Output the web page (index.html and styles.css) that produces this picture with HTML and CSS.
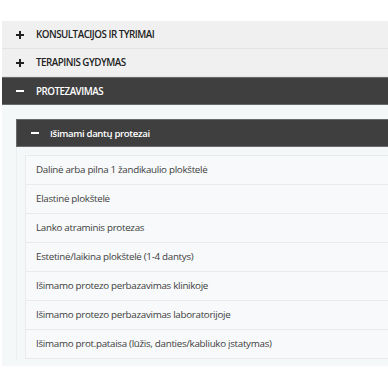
FILE: index.html
```html
<!DOCTYPE html>
<html lang="lt">
<head>
<meta charset="utf-8">
<link rel="stylesheet" href="styles.css">
</head>
<body>
<div class="accordion">
  <div class="acc-item">
    <div class="acc-head"><span class="icon plus"></span><span class="label">KONSULTACIJOS IR TYRIMAI</span></div>
  </div>
  <div class="acc-item">
    <div class="acc-head"><span class="icon plus"></span><span class="label">TERAPINIS GYDYMAS</span></div>
  </div>
  <div class="acc-item open">
    <div class="acc-head dark"><span class="icon minus"></span><span class="label">PROTEZAVIMAS</span></div>
    <div class="acc-body">
      <div class="sub">
        <div class="sub-head"><span class="icon minus"></span><span class="sub-label">Išimami dantų protezai</span></div>
        <div class="sub-body">
          <ul class="list">
            <li>Dalinė arba pilna 1 žandikaulio plokštelė</li>
            <li>Elastinė plokštelė</li>
            <li>Lanko atraminis protezas</li>
            <li>Estetinė/laikina plokštelė (1-4 dantys)</li>
            <li>Išimamo protezo perbazavimas klinikoje</li>
            <li>Išimamo protezo perbazavimas laboratorijoje</li>
            <li>Išimamo prot.pataisa (lūžis, danties/kabliuko įstatymas)</li>
          </ul>
        </div>
      </div>
    </div>
  </div>
</div>
</body>
</html>
```

FILE: styles.css
```css
html, body {
  margin: 0;
  padding: 0;
  background: #ffffff;
  overflow: hidden;
}
body {
  font-family: "Open Sans", "Liberation Sans", sans-serif;
  width: 388px;
  height: 388px;
  overflow: hidden;
}
.accordion {
  margin: 21px 0 0 2px;
  width: 406px;
}
.acc-head {
  height: 27px;
  display: flex;
  align-items: center;
  background: #f0f0f0;
  border-bottom: 1px solid #e4e4e4;
  color: #222;
  padding-left: 14px;
}
.acc-head.dark {
  background: #3f3f3f;
  color: #fff;
  border-top: 1px solid #6a6a6a;
  border-bottom: 1px solid #6a6a6a;
  height: 26px;
}
.label {
  font-size: 9.8px;
  font-weight: 600;
  letter-spacing: -0.5px;
  margin-left: 12px;
}
.icon {
  position: relative;
  width: 8px;
  height: 8px;
  flex: none;
}
.icon::before, .icon::after {
  content: "";
  position: absolute;
  background: currentColor;
}
.icon::before {
  left: 0;
  top: 3px;
  width: 8px;
  height: 2px;
}
.plus::after {
  left: 3px;
  top: 0;
  width: 2px;
  height: 8px;
}
.minus::after { display: none; }
.acc-body {
  background: #f5f8f9;
  padding: 14px 0 7px 14px;
}
.sub-head {
  height: 26px;
  display: flex;
  align-items: center;
  background: #3f3f3f;
  color: #fff;
  border: 1px solid #6a6a6a;
  padding-left: 14px;
}
.sub-label {
  font-size: 9.6px;
  font-weight: 600;
  letter-spacing: -0.35px;
  margin-left: 11px;
}
.sub-body {
  border-left: 1px solid #e9eef0;
  padding: 8px 0 0 8px;
}
.list {
  list-style: none;
  margin: 0;
  padding: 0;
  border: 1px solid #e8eaeb;
  border-right: none;
  background: #f7f9fa;
}
.list li {
  height: 28px;
  line-height: 28px;
  border-bottom: 1px solid #e8eaeb;
  font-size: 9.8px;
  letter-spacing: -0.3px;
  color: #3d3d3d;
  padding-left: 10px;
}
.list li:last-child {
  border-bottom: none;
}
```
